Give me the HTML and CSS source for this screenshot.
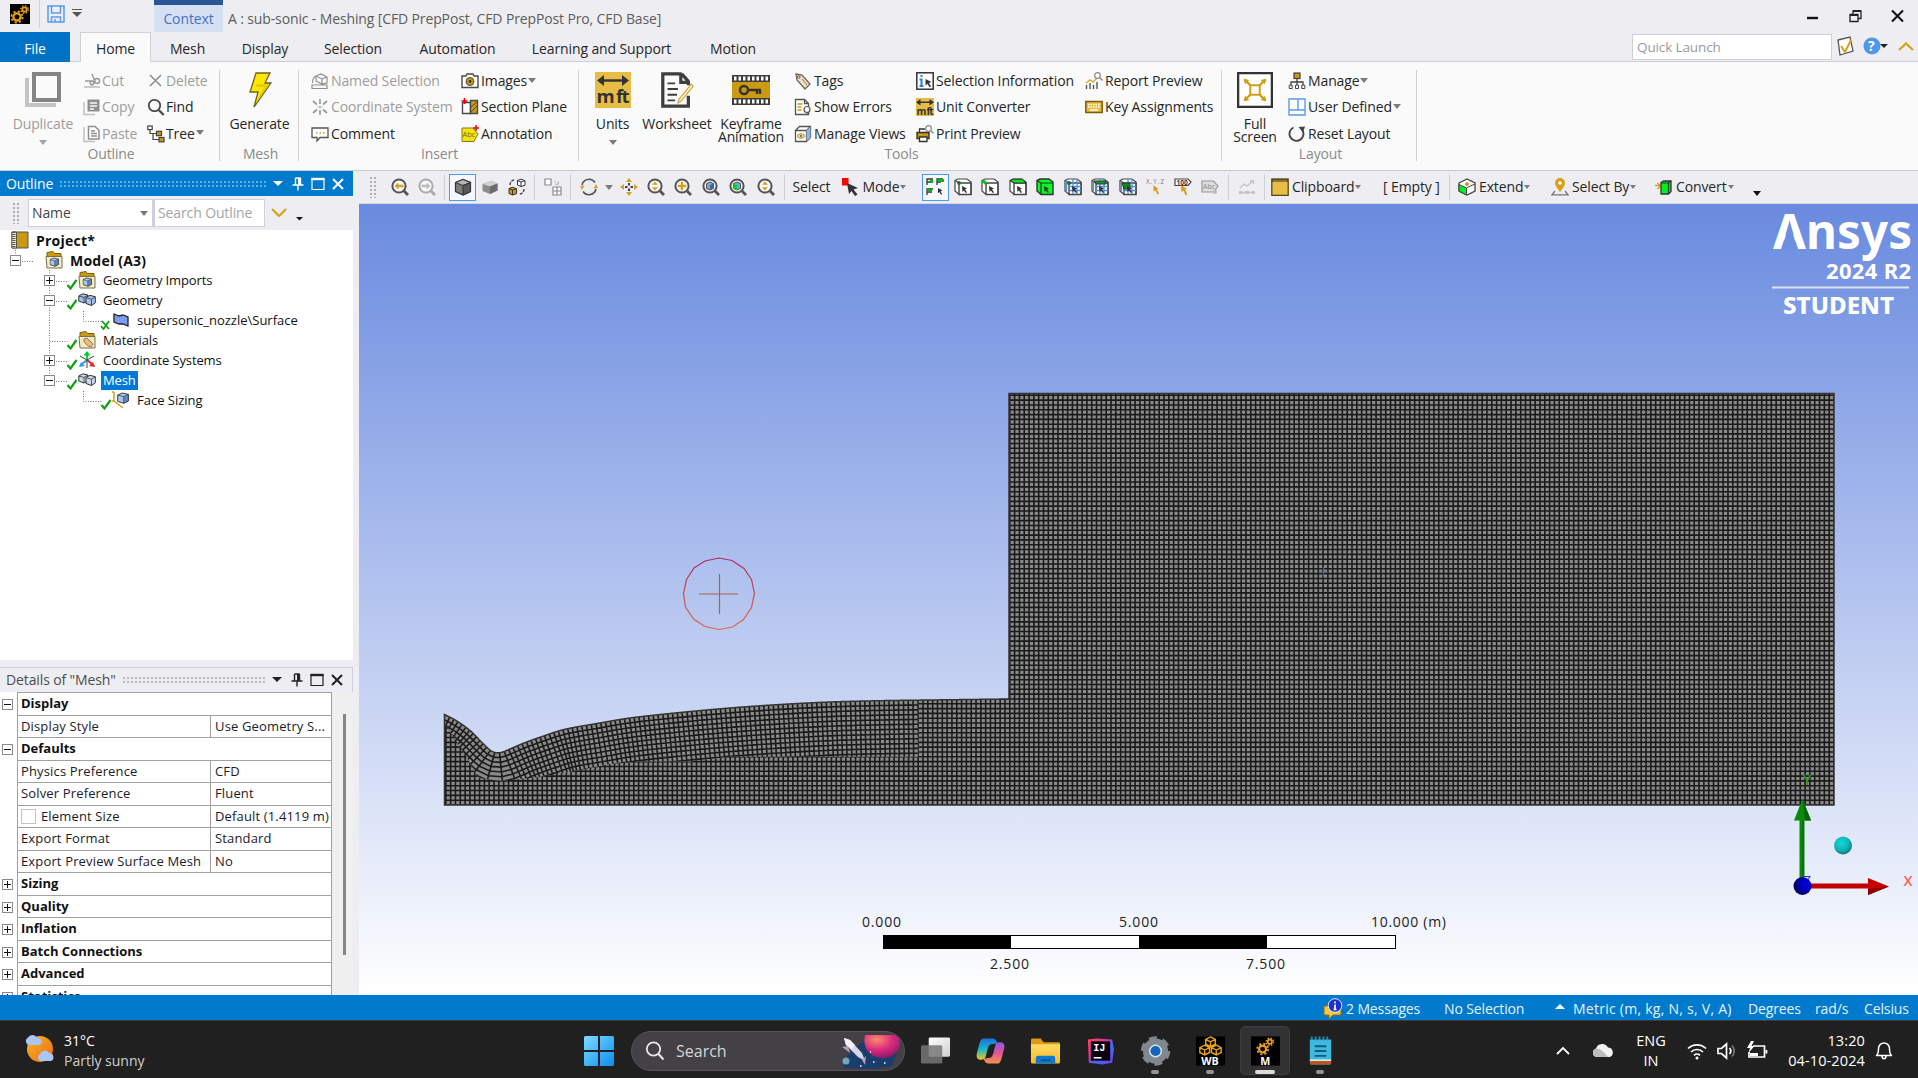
FILE: index.html
```html
<!DOCTYPE html>
<html lang="en">
<head>
<meta charset="utf-8">
<title>A : sub-sonic - Meshing</title>
<link rel="stylesheet" href="styles.css">
</head>
<body>
<svg class="defs" aria-hidden="true">
  <defs>
    <linearGradient id="gSky" x1="0" y1="0" x2="0" y2="1"><stop offset="0" stop-color="#698adf"/><stop offset="1" stop-color="#ffffff"/></linearGradient>
    <linearGradient id="gWin" x1="0" y1="0" x2="1" y2="1"><stop offset="0" stop-color="#7fdcff"/><stop offset="1" stop-color="#0a8cf0"/></linearGradient>
    <linearGradient id="gSun" x1="0" y1="0" x2="1" y2="1"><stop offset="0" stop-color="#fbb62c"/><stop offset="1" stop-color="#ea6a12"/></linearGradient>
    <linearGradient id="gCopA" x1="0" y1="0" x2="0" y2="1"><stop offset="0" stop-color="#1c6fe0"/><stop offset=".5" stop-color="#19b6c9"/><stop offset="1" stop-color="#e9c71e"/></linearGradient>
    <linearGradient id="gCopB" x1="0" y1="0" x2="0" y2="1"><stop offset="0" stop-color="#8a58e8"/><stop offset=".5" stop-color="#e0559a"/><stop offset="1" stop-color="#f8924a"/></linearGradient>
    <linearGradient id="gIj" x1="0" y1="0" x2="1" y2="1"><stop offset="0" stop-color="#fc4a5a"/><stop offset=".35" stop-color="#e8318c"/><stop offset=".6" stop-color="#3b6cf5"/><stop offset="1" stop-color="#7a35e8"/></linearGradient>
    <linearGradient id="gFolder" x1="0" y1="0" x2="0" y2="1"><stop offset="0" stop-color="#ffdc6a"/><stop offset="1" stop-color="#f7b923"/></linearGradient>
    <linearGradient id="gTv" x1="0" y1="0" x2="1" y2="1"><stop offset="0" stop-color="#ffffff"/><stop offset="1" stop-color="#cfcfcf"/></linearGradient>
    <radialGradient id="gTeal" cx=".4" cy=".35" r=".7"><stop offset="0" stop-color="#12d6d6"/><stop offset=".6" stop-color="#0fb5b5"/><stop offset="1" stop-color="#0a6f70"/></radialGradient>
    <radialGradient id="gBlue" cx=".7" cy=".4" r=".7"><stop offset="0" stop-color="#0000e8"/><stop offset=".5" stop-color="#0000b0"/><stop offset="1" stop-color="#000058"/></radialGradient>
    <radialGradient id="gPlanet" cx=".35" cy=".2" r=".9"><stop offset="0" stop-color="#ff8a6e"/><stop offset=".5" stop-color="#d92a7e"/><stop offset="1" stop-color="#7d1668"/></radialGradient>
    <linearGradient id="gRing" x1="0" y1="0" x2="0" y2="1"><stop offset="0" stop-color="#b02a68"/><stop offset=".5" stop-color="#c2504c"/><stop offset="1" stop-color="#dc6a4c"/></linearGradient>

    <symbol id="i-gears" viewBox="0 0 20 20"><rect width="20" height="20" fill="#000"/><g fill="none" stroke="#e8a31b"><circle cx="7" cy="13" r="3.6" stroke-width="2.2"/><circle cx="7" cy="13" r="5.6" stroke-width="1.8" stroke-dasharray="2.2 2.2"/><circle cx="14.5" cy="5.5" r="2.2" stroke-width="1.7"/><circle cx="14.5" cy="5.5" r="3.8" stroke-width="1.4" stroke-dasharray="1.5 1.5"/></g></symbol>
    <symbol id="i-save" viewBox="0 0 18 18"><path d="M1 1h16v16H1zM4.500 1v7h9V1M4.500 17v-5h9v5M8 17v-3" fill="none" stroke="#5b9bea" stroke-width="1.500"/></symbol>
    <symbol id="i-dup" viewBox="0 0 36 36"><path d="M2 6v27h29" fill="none" stroke="#c3c3c3" stroke-width="4"/><rect x="9" y="2" width="25" height="26" fill="#fafafa" stroke="#858585" stroke-width="4"/></symbol>
    <symbol id="i-cut" viewBox="0 0 18 18"><path d="M1 15h16" stroke="#bbb" stroke-width="1.500"/><g fill="none" stroke="#9a9a9a" stroke-width="1.500"><path d="M9 2l3 8M2 9h8"/><circle cx="14" cy="9" r="2.500"/><circle cx="9" cy="11" r="1.800"/></g></symbol>
    <symbol id="i-copy" viewBox="0 0 18 18"><path d="M1 4v12.500h11" fill="none" stroke="#c0c0c0" stroke-width="1.500"/><path d="M4.500 1.500h12v12h-12z" fill="#8f8f8f"/><path d="M7 5h7M7 8h7M7 11h4" stroke="#fafafa" stroke-width="1.300"/></symbol>
    <symbol id="i-paste" viewBox="0 0 18 18"><path d="M1 2v14.500h11" fill="none" stroke="#c0c0c0" stroke-width="1.500"/><path d="M5.500 1.500h6.500l4 4v8.500h-10.500z" fill="#fff" stroke="#8f8f8f" stroke-width="1.500"/><path d="M8 6h4M8 8.500h6M8 11h6" stroke="#8f8f8f" stroke-width="1.300"/></symbol>
    <symbol id="i-del" viewBox="0 0 18 18"><path d="M3 3l11 11M14 3L3 14" stroke="#8f8f8f" stroke-width="1.600"/></symbol>
    <symbol id="i-find" viewBox="0 0 18 18"><circle cx="7.500" cy="7.500" r="5.700" fill="none" stroke="#4a4a4a" stroke-width="1.800"/><path d="M11.700 12l5 5" stroke="#4a4a4a" stroke-width="2.400"/></symbol>
    <symbol id="i-tree" viewBox="0 0 18 18"><g fill="#fff" stroke="#444" stroke-width="1.200"><path d="M3 4v4.500h6M6 8.500v6h6" fill="none"/><rect x=".8" y="1" width="4.400" height="3.600"/><rect x="9.500" y="6.300" width="5" height="4.400" fill="#c99a10"/><rect x="12" y="12.500" width="5" height="4.400" fill="#c99a10"/></g></symbol>
    <symbol id="i-bolt" viewBox="0 0 24 36"><path d="M8 1h14l-5 10h6L6 35l4-15H2z" fill="#ffe600" stroke="#6e6325" stroke-width="1.300"/><path d="M22 12L7 33l9-18H8l1-3z" fill="#d8bc00" opacity=".6"/></symbol>
    <symbol id="i-named" viewBox="0 0 18 18"><g fill="none" stroke="#8f8f8f" stroke-width="1.200"><path d="M1 13h15v3.500H1zM5 4l5-2 6 3v6l-5 1-6-3zM5 4l6 3v5M11 7l5-2M1.500 11c0-4 1-6 3.500-7"/></g></symbol>
    <symbol id="i-cs" viewBox="0 0 18 18"><path d="M9 1v5M9 17v-5M2 3l4 3.500M16 3l-4 3.500M2 15l4-3.500M16 15l-4-3.500" stroke="#999" stroke-width="1.700"/><path d="M6 9h6M9 7v4" stroke="#bbb"/></symbol>
    <symbol id="i-comment" viewBox="0 0 18 18"><path d="M1 3h16v9.500H9l-3 3.500v-3.500H1z" fill="#fff" stroke="#555" stroke-width="1.300"/><path d="M5 8h1.500M8.500 8H10M12 8h1.500" stroke="#c99a10" stroke-width="1.300"/></symbol>
    <symbol id="i-cam" viewBox="0 0 18 18"><path d="M1 4h4l1-2h6l1 2h4v11.500H1z" fill="#fff" stroke="#4a4a4a" stroke-width="1.400"/><circle cx="9" cy="9.500" r="4" fill="#c99a10" stroke="#4a4a4a"/><circle cx="9" cy="9.500" r="1.400" fill="#333"/></symbol>
    <symbol id="i-section" viewBox="0 0 18 18"><path d="M1.500 4.500h8v11h-8z" fill="#fff" stroke="#4a4a4a" stroke-width="1.400"/><path d="M9.500 2.500h7v13h-7z" fill="#c99a10" stroke="#4a4a4a" stroke-width="1.400"/><path d="M10 9l6-5M10 14l6-6" stroke="#4a4a4a"/><path d="M3.500 0v6M.5 3h6" stroke="#e00" stroke-width="1.500"/></symbol>
    <symbol id="i-anno" viewBox="0 0 18 18"><path d="M1 3h11l5 6-4 7.500H1z" fill="#f2e21c" stroke="#8c7a00"/><text x="1.500" y="12" font-size="7.500" fill="#7a6a00">Abc</text><path d="M15 0v6M12 3h6" stroke="#e00" stroke-width="1.500"/></symbol>
    <symbol id="i-units" viewBox="0 0 36 36"><rect width="36" height="36" fill="#e7bd45"/><path d="M5 8.500h26" stroke="#333" stroke-width="2.400"/><path d="M2 8.500l7-5.500v11zM34 8.500L27 3v11z" fill="#333"/><text x="1.500" y="31" font-size="18.500" font-weight="700" fill="#333" textLength="33">m ft</text></symbol>
    <symbol id="i-sheet" viewBox="0 0 36 38"><path d="M23 2H3v34h27V25M23 2l7 8v4M22 2v9h8" fill="none" stroke="#3e3e3e" stroke-width="3.400"/><path d="M8 12h8M8 18h11M8 24h10M8 30h8" stroke="#3e3e3e" stroke-width="2"/><path d="M33 13l2 2-13 16-3 1.500 1-3.500z" fill="#fff" stroke="#dca93a" stroke-width="1.400"/></symbol>
    <symbol id="i-key" viewBox="0 0 38 30"><rect width="38" height="30" fill="#3e3e3e"/><rect y="7" width="38" height="16" fill="#cb9a10"/><path d="M2 3.500h36M2 26.500h36" stroke="#fff" stroke-width="4" stroke-dasharray="2.500 2"/><circle cx="12" cy="15" r="4" fill="none" stroke="#333" stroke-width="2.500"/><path d="M16 15h13M25 15v4M28 15v4" stroke="#333" stroke-width="2.400"/></symbol>
    <symbol id="i-tag" viewBox="0 0 18 18"><path d="M2 2l6 1 8 9-5 5-8-9z" fill="#efe0c0" stroke="#6e6656" stroke-width="1.300"/><circle cx="4.800" cy="5" r="1.300" fill="#fff" stroke="#555"/><path d="M8 7l5 6" stroke="#8a7d5c"/></symbol>
    <symbol id="i-err" viewBox="0 0 18 18"><path d="M1.500 1.500h9l4 4v11h-13zM10.500 1.500v4h4" fill="#fff" stroke="#555" stroke-width="1.300"/><path d="M3.500 6h5M3.500 9h4M3.500 12h4" stroke="#c99a10" stroke-width="1.300"/><circle cx="13" cy="11.500" r="3" fill="#fff" stroke="#555" stroke-width="1.200"/><path d="M12 16h2.500" stroke="#555"/></symbol>
    <symbol id="i-views" viewBox="0 0 18 18"><path d="M1.500 5.500l4-4h11v11l-4 4h-11zM12.500 5.500l4-4M1.500 5.500h11v11" fill="#fff" stroke="#555" stroke-width="1.300"/><path d="M12.500 5.500l4-4v11l-4 4z" fill="#8db4e2"/><ellipse cx="7" cy="11" rx="3.500" ry="2.200" fill="#f3e2ae" stroke="#b18a20"/><circle cx="7" cy="11" r="1" fill="#555"/></symbol>
    <symbol id="i-selinfo" viewBox="0 0 18 18"><rect x=".8" y=".8" width="16.400" height="16.400" fill="#fff" stroke="#333" stroke-width="1.500"/><path d="M5.500 3v2M3.500 7.500h2v6.500M3.500 14h4" stroke="#2b7de0" stroke-width="2" fill="none"/><path d="M9.500 7l6 3-2.500 1 2 3.500-1.500.7-2-3.400-2 1.700z" fill="#333"/></symbol>
    <symbol id="i-uconv" viewBox="0 0 36 36"><rect width="36" height="36" fill="#e7bd45"/><path d="M3 8.500h30" stroke="#333" stroke-width="3"/><path d="M0 8.500L9 2v13zM36 8.500L27 2v13z" fill="#333"/><text x="1" y="33" font-size="20" font-weight="700" fill="#333" textLength="34">m ft</text></symbol>
    <symbol id="i-print" viewBox="0 0 18 18"><path d="M1 7.500h12v6H1z" fill="#c99a10" stroke="#333" stroke-width="1.400"/><path d="M3.500 7V4H9M3.500 12h7.500v4.500H3.500z" fill="#fff" stroke="#333" stroke-width="1.300"/><circle cx="12.500" cy="3.500" r="2.800" fill="#fff" stroke="#888" stroke-width="1.200"/><path d="M14.500 5.500l3 3" stroke="#888" stroke-width="1.400"/></symbol>
    <symbol id="i-report" viewBox="0 0 18 18"><path d="M1.500 13v4M5 11v6M8.500 13v4M12 10v7" stroke="#555" stroke-width="1.400"/><path d="M1 11l4-3 3 2 4-4" stroke="#dca93a" stroke-width="1.500" fill="none"/><circle cx="12.500" cy="3.500" r="2.800" fill="#fff" stroke="#888" stroke-width="1.200"/><path d="M14.500 5.500l3 3" stroke="#888" stroke-width="1.400"/></symbol>
    <symbol id="i-kbd" viewBox="0 0 18 18"><rect x=".8" y="3.500" width="16.400" height="11" fill="#e7bd45" stroke="#7a5c0a" stroke-width="1.500"/><path d="M3 6.500h12M3 9h12" stroke="#fff" stroke-width="1.500" stroke-dasharray="1.500 1"/><path d="M5 12h8" stroke="#fff" stroke-width="1.400"/></symbol>
    <symbol id="i-full" viewBox="0 0 38 38"><rect x="1.200" y="1.200" width="35.600" height="35.600" fill="#fff" stroke="#333" stroke-width="2.400"/><rect x="14" y="14" width="10" height="10" fill="none" stroke="#cf9d12" stroke-width="2"/><path d="M14 14L8 8M24 14l6-6M14 24l-6 6M24 24l6 6" stroke="#cf9d12" stroke-width="2.500"/><path d="M7 7l6 1.500L8.500 13zM31 7l-6 1.500L29.500 13zM7 31l6-1.500L8.500 25zM31 31l-6-1.500 4.500-4.500z" fill="#cf9d12"/></symbol>
    <symbol id="i-manage" viewBox="0 0 18 18"><path d="M9 6v4M3 13v-3h12v3M9 10v3" fill="none" stroke="#444" stroke-width="1.300"/><rect x="6" y="1" width="6" height="5.500" fill="#c99a10" stroke="#444" stroke-width="1.200"/><path d="M1.200 13.200h3v3.300h-3zM7.500 13.200h3v3.300h-3zM13.800 13.200h3v3.300h-3z" fill="#fff" stroke="#444"/></symbol>
    <symbol id="i-user" viewBox="0 0 18 18"><path d="M1 1h16v16H1zM1 12h16M10 1v11" fill="#fff" stroke="#5b9bea" stroke-width="1.400"/></symbol>
    <symbol id="i-reset" viewBox="0 0 18 18"><path d="M5.500 2.500A7 7 0 1 0 14 4.500" fill="none" stroke="#444" stroke-width="1.900"/><path d="M10.500 2l6.500-.5-2 6z" fill="#444"/></symbol>

    <symbol id="m-glass" viewBox="0 0 18 18"><circle cx="8" cy="8" r="6.600" fill="#fafafa" stroke="currentColor" stroke-width="2"/><path d="M12.800 12.800l4.200 4.200" stroke="currentColor" stroke-width="2.800"/></symbol>
    <symbol id="t-back" viewBox="0 0 18 18"><use href="#m-glass"/><path d="M3.500 8l4-3.500v2.300h5v2.400h-5v2.300z" fill="#d6a01c"/></symbol>
    <symbol id="t-fwd" viewBox="0 0 18 18"><use href="#m-glass"/><path d="M12.500 8l-4-3.500v2.300h-5v2.400h5v2.300z" fill="#bbb"/></symbol>
    <symbol id="t-updn" viewBox="0 0 18 18"><use href="#m-glass"/><path d="M8 3.500l3 3.300H5zM8 12.500L5 9.200h6z" fill="#d6a01c"/></symbol>
    <symbol id="t-plus" viewBox="0 0 18 18"><use href="#m-glass"/><path d="M8 3.700v8.600M3.700 8h8.600" stroke="#d6a01c" stroke-width="2.400"/></symbol>
    <symbol id="t-fit" viewBox="0 0 18 18"><use href="#m-glass"/><path d="M4.500 5.500L8 4l3.500 1.500v5L8 12l-3.500-1.500z" fill="#7aa4dc" stroke="#333" stroke-width=".8"/><path d="M8 7v5l3.500-1.500v-5z" fill="#44699c"/></symbol>
    <symbol id="t-fitg" viewBox="0 0 18 18"><use href="#m-glass"/><path d="M4.500 5.500L8 4l3.500 1.500v5L8 12l-3.500-1.500z" fill="#7aa4dc" stroke="#333" stroke-width=".8"/><path d="M4.500 6L8 7v5l-3.500-1.500z" fill="#00d820"/></symbol>
    <symbol id="t-cube" viewBox="0 0 18 18"><path d="M1.500 4.500L9 1.500l7.500 3v9L9 17l-7.500-3.500z" fill="#7c7c7c" stroke="#333" stroke-width="1.200"/><path d="M1.500 4.500L9 1.500l7.500 3L9 7.500z" fill="#b5b5b5" stroke="#333"/><path d="M9 7.500l7.500-3v9L9 17z" fill="#585858" stroke="#333"/></symbol>
    <symbol id="t-cubel" viewBox="0 0 18 18"><path d="M1.500 6L10 3l6.500 2.500v7L9 16l-7.500-3z" fill="#8c8c8c"/><path d="M1.500 6L10 3l6.500 2.500L9 8.500z" fill="#d0d0d0"/><path d="M9 8.500l7.500-3v7L9 16z" fill="#6c6c6c"/></symbol>
    <symbol id="t-swap" viewBox="0 0 18 18"><path d="M9.500 2.500l3.500-1.300 4 1.500v4.500L13 8.500 9.500 7z" fill="#fff" stroke="#333"/><path d="M9.500 2.500L13 4v4.500M13 4l4-1.500" fill="none" stroke="#333"/><path d="M1 10.500l3.500-1.300 4 1.500v5L4.500 17 1 15.500z" fill="#c99a10" stroke="#333"/><path d="M1 10.500L4.500 12v5M4.500 12l4-1.500" fill="none" stroke="#333"/><path d="M2 7c0-3 2-5 5-5M16 11c0 3-2 5-5 5" fill="none" stroke="#444" stroke-width="1.400" stroke-dasharray="3 1"/></symbol>
    <symbol id="t-expl" viewBox="0 0 18 18"><path d="M1 1h6v6H1zM9 9h8v8H9zM13 9v8M9 13h8" fill="#fff" stroke="#8a8a8a" stroke-width="1.200"/><path d="M10 3l4 3M11 6.500h3.500V3" fill="none" stroke="#c0c0c0"/></symbol>
    <symbol id="t-rot" viewBox="0 0 18 18"><path d="M2 7a7.200 7.200 0 0 1 13-2.500M16 11a7.200 7.200 0 0 1-13 2.500" fill="none" stroke="#555" stroke-width="1.600"/><path d="M0 8l4.500-.5L2 12zM18 10l-4.500.5L16 6z" fill="#d6a01c"/></symbol>
    <symbol id="t-pan" viewBox="0 0 18 18"><path d="M9 0l3 4H6zM9 18l3-4H6zM0 9l4-3v6zM18 9l-4-3v6z" fill="#d6a01c"/><path d="M9 5v2.500M9 10.500V13M5 9h2.500M10.500 9H13" stroke="#444" stroke-width="2"/></symbol>
    <symbol id="t-mode" viewBox="0 0 18 18"><path d="M1 0h6.500v7.500H1z" fill="#f00"/><path d="M6 5l11 5-4.500 1.500 4 5-2.500 1.500-3.500-5L8 16z" fill="#333"/></symbol>
    <symbol id="m-arrow" viewBox="0 0 18 18"><path d="M8 8l5 2.500-2 .9 2 2.800-1.200.9-1.900-2.700L8.500 14z" fill="#333"/></symbol>
    <symbol id="m-box" viewBox="0 0 18 18"><path d="M1 2.500l3-1.500h9l4 3v12.500H5L1 13z" fill="#fff" stroke="#444" stroke-width="1.200"/><path d="M5 5h12v11.500H5zM1 2.500L5 5" fill="none" stroke="#444" stroke-width="1.400"/></symbol>
    <symbol id="t-s0" viewBox="0 0 20 20"><path d="M2 8V2h6M2 5h5M12 8V2h6M12 5h4M2 18v-6h6M2 15h5" fill="none" stroke="#333" stroke-width="1.300"/><path d="M5 3h3v3H5zM13 2h6v3h-6zM2 12h5v2.500H2z" fill="#00b818"/><path d="M13 11l4.500 2.500-2 .8 1.700 2.700-1.200.8-1.700-2.700-1.300 1.200z" fill="#333"/></symbol>
    <symbol id="t-s1" viewBox="0 0 18 18"><use href="#m-box"/><circle cx="5" cy="5" r="1.900" fill="#2a6b2a"/><use href="#m-arrow"/></symbol>
    <symbol id="t-s2" viewBox="0 0 18 18"><use href="#m-box"/><path d="M1.500 2.500l3.500 3" stroke="#00c820" stroke-width="3"/><use href="#m-arrow"/></symbol>
    <symbol id="t-s3" viewBox="0 0 18 18"><use href="#m-box"/><path d="M1.500 2.500L4 1.200h9L17 5H5z" fill="#00e620" stroke="#333"/><use href="#m-arrow"/></symbol>
    <symbol id="t-s4" viewBox="0 0 18 18"><path d="M1 2.500l3-1.500h9l4 3v12.500H5L1 13z" fill="#00ff1e" stroke="#333" stroke-width="1.400"/><path d="M1 2.500L5 5v11.500M5 5h12" fill="none" stroke="#333" stroke-width="1.200"/><use href="#m-arrow"/></symbol>
    <symbol id="m-grid" viewBox="0 0 18 18"><path d="M5 8.500h12M5 12.500h12M9 1v15M13 1v15M2.500 3v10" stroke="#4b8fe2" fill="none" stroke-width="1.300"/></symbol>
    <symbol id="t-s5" viewBox="0 0 18 18"><use href="#m-box"/><use href="#m-grid"/><circle cx="5" cy="5" r="2" fill="#2a6b2a"/><use href="#m-arrow"/></symbol>
    <symbol id="t-s6" viewBox="0 0 18 18"><use href="#m-box"/><use href="#m-grid"/><path d="M3 3h12v3H5z" fill="#0a9c22" stroke="#333"/><use href="#m-arrow"/></symbol>
    <symbol id="t-s7" viewBox="0 0 18 18"><use href="#m-box"/><use href="#m-grid"/><path d="M3 5h8v6H5z" fill="#0a8c22" stroke="#333"/><use href="#m-arrow"/></symbol>
    <symbol id="t-xyz" viewBox="0 0 20 18"><text x="0" y="6" font-size="7" fill="#777" textLength="20">X.Y.Z</text><path d="M8 7l6 4-2 .5 2.500 5-2 .8-2-4.500L8.500 14z" fill="#d6a01c"/></symbol>
    <symbol id="t-100" viewBox="0 0 18 18"><path d="M1 1h13l3 3-3 3.500H1z" fill="#fff" stroke="#444" stroke-width="1.200"/><text x="2.500" y="6.500" font-size="6.500" font-weight="700" fill="#333">100</text><path d="M7 7l6 4-2 .5 2.500 5-2 .8-2-4.500L7.500 14z" fill="#d6a01c"/></symbol>
    <symbol id="t-abc" viewBox="0 0 18 18"><path d="M1 3h11.500l4.500 5-4 6H1z" fill="#ddd" stroke="#999" stroke-width="1.200"/><text x="2" y="11" font-size="7" fill="#888">Abc</text><circle cx="14" cy="14" r="2" fill="#bbb"/></symbol>
    <symbol id="t-chart" viewBox="0 0 18 18"><path d="M2 10l4-4 3 2 6-5M12 3h3.500v3M1 14.500h16" fill="none" stroke="#c4c4c4" stroke-width="1.300"/><path d="M1 14.500h3M7 14.500h4M14 14.500h3" stroke="#c4c4c4" stroke-width="3"/></symbol>
    <symbol id="t-clip" viewBox="0 0 18 18"><rect x=".8" y="1" width="16.400" height="16.400" fill="#e7bd45" stroke="#554a22" stroke-width="1.300"/><path d="M1 1h16v3H1zM6 4l3-2 3 2z" fill="#554a22"/><path d="M2 3h14" stroke="#e7bd45" stroke-width=".8"/></symbol>
    <symbol id="t-ext" viewBox="0 0 18 18"><path d="M1 5l8-4 8 4v8l-8 4-8-4z" fill="#fff" stroke="#444" stroke-width="1.300"/><path d="M1 6.500L8.500 10v7L1 13z" fill="#00f020" stroke="#444"/><path d="M9 9.500L17 6M9 4v4M7 6h4" stroke="#444" fill="none"/><path d="M9 4v3.500M7 5.700h4" stroke="#d6a01c" stroke-width="1.500"/></symbol>
    <symbol id="t-selby" viewBox="0 0 18 18"><path d="M9 0a5 5 0 0 1 5 5c0 3-5 9-5 9S4 8 4 5a5 5 0 0 1 5-5z" fill="#d6a01c"/><circle cx="9" cy="5" r="1.800" fill="#fff"/><path d="M4 13l-3 3.800h16L14 13" fill="none" stroke="#777" stroke-width="1.300"/></symbol>
    <symbol id="t-conv" viewBox="0 0 18 18"><path d="M0 7.500h4M2.500 5l3 3-3 3" stroke="#d6a01c" stroke-width="1.600" fill="none"/><path d="M6 4.500L8.500 3H16v10.500L13.500 16H6z" fill="#00f020" stroke="#333" stroke-width="1.300"/><path d="M6 5h7.500v11M13.500 5L16 3" fill="none" stroke="#333" stroke-width="1.200"/></symbol>

    <symbol id="o-proj" viewBox="0 0 18 18"><path d="M1 1h16v16H1z" fill="#c9990f" stroke="#555"/><path d="M1 1h4.500v16H1z" fill="#f7edc8" stroke="#555"/><path d="M3 1v16" stroke="#555" stroke-width="3" stroke-dasharray="1 1"/></symbol>
    <symbol id="m-folder" viewBox="0 0 18 18"><path d="M2 4V1.500l6-1 1.500 2H16V6H2z" fill="#c9990f" stroke="#7c5f0c"/><path d="M1 5.500h16V17H2z" fill="#f6ecc0" stroke="#77704f"/></symbol>
    <symbol id="m-cube" viewBox="0 0 18 18"><path d="M1 4.500L8 1.500l9 2v10l-7 3.500-9-3z" fill="#a9c6ef" stroke="#333" stroke-width="1.400"/><path d="M10 7l7-3.500v10L10 17z" fill="#6088c4" stroke="#333"/><path d="M1 4.500L10 7" stroke="#333"/></symbol>
    <symbol id="o-fcube" viewBox="0 0 18 18"><use href="#m-folder"/><use href="#m-cube" x="4.500" y="6" width="9.500" height="10"/></symbol>
    <symbol id="m-pair" viewBox="0 0 18 18"><path d="M.8 5l4-2.200 5 1.200v6L6 12 .8 10z" stroke="#333"/><path d="M.8 5L6 6.500V12M6 6.500L9.800 4" fill="none" stroke="#333" stroke-width=".8"/><path d="M8 6.500L12 4.300l5.300 1.500v6L13.500 14.500 8 12.500z" stroke="#333"/><path d="M8 6.500l5.500 1.800v6.200M13.500 8.300l3.800-2.500" fill="none" stroke="#333" stroke-width=".8"/></symbol>
    <symbol id="o-geo" viewBox="0 0 18 18"><use href="#m-pair" fill="#a3c2ee"/></symbol>
    <symbol id="o-mesh" viewBox="0 0 18 18"><use href="#m-pair" fill="#cddaee"/></symbol>
    <symbol id="o-surf" viewBox="0 0 18 18"><path d="M2 3l5 2 4-1 5 2v9l-5-2-4 0-5-2z" fill="#7f9cf4" stroke="#222" stroke-width="1.300"/></symbol>
    <symbol id="o-mat" viewBox="0 0 18 18"><use href="#m-folder"/><path d="M6 8l3-1 6 6-2 3-3-1-4-4z" fill="#e9b98a" stroke="#a67848"/></symbol>
    <symbol id="o-cs" viewBox="0 0 18 18"><path d="M9 9V4" stroke="#0d3" stroke-width="2"/><path d="M9 0l3.500 4.500h-7z" fill="#00cc22"/><path d="M9 9l5 4" stroke="#e22" stroke-width="2"/><path d="M17 16l-6-1 4-4z" fill="#e22"/><path d="M9 9l-5 4" stroke="#39e" stroke-width="2"/><path d="M1 16l6-1-4-4z" fill="#39e"/><path d="M9 9L2 5M9 9l7-4M9 9v8" stroke="#444"/></symbol>
    <symbol id="o-face" viewBox="0 0 18 18"><path d="M2 1v9l9 7M2 1H0M2 10H0" fill="none" stroke="#d6a01c" stroke-width="1.500"/><use href="#m-cube" x="5" y="1" width="12" height="12"/></symbol>
    <symbol id="o-ok" viewBox="0 0 12 12"><path d="M1.500 7l3 3.500L10.500 2" fill="none" stroke="#12a012" stroke-width="2.200"/></symbol>
    <symbol id="o-okx" viewBox="0 0 12 12"><path d="M1 8l2.500 3L9 3M2 3l7 8" fill="none" stroke="#12a012" stroke-width="1.800"/></symbol>

    <symbol id="w-pin" viewBox="0 0 14 14"><path d="M4.500 1h5M4.500 1v7M9.500 1v7M1.500 8h11M7 8v5.500" fill="none" stroke="currentColor" stroke-width="1.400"/><path d="M8 1v7" stroke="currentColor" stroke-width="2"/></symbol>
    <symbol id="w-max" viewBox="0 0 14 14"><path d="M1 1.500h12v11H1z" fill="none" stroke="currentColor" stroke-width="1.200"/><path d="M.5 2h13" stroke="currentColor" stroke-width="2.400"/></symbol>
    <symbol id="w-x" viewBox="0 0 14 14"><path d="M2 2l10 10M12 2L2 12" stroke="currentColor" stroke-width="2"/></symbol>
  </defs>
</svg>

<header class="titlebar">
  <svg class="app-icon"><use href="#i-gears"/></svg>
  <i class="qat-sep"></i>
  <svg class="save"><use href="#i-save"/></svg>
  <i class="qat-more"></i>
  <div class="context">Context</div>
  <div class="title">A : sub-sonic - Meshing [CFD PrepPost, CFD PrepPost Pro, CFD Base]</div>
  <svg class="winctl" viewBox="0 0 110 24"><path d="M8 12h11" stroke="#111" stroke-width="2.400"/><path d="M51 8.500h8v7h-8zM54 8V5h8v7.500h-3" fill="none" stroke="#222" stroke-width="1.300"/><path d="M51 9h8M54 5h8" stroke="#222" stroke-width="2"/><path d="M93 4.500l11 11M104 4.500l-11 11" stroke="#111" stroke-width="2.100"/></svg>
</header>

<nav class="tabs">
  <span class="file">File</span>
  <span class="tab home">Home</span>
  <span class="tab t-mesh">Mesh</span>
  <span class="tab t-disp">Display</span>
  <span class="tab t-sel">Selection</span>
  <span class="tab t-auto">Automation</span>
  <span class="tab t-learn">Learning and Support</span>
  <span class="tab t-mot">Motion</span>
  <div class="quick">Quick Launch</div>
  <svg class="quick-icons" viewBox="0 0 86 30"><path d="M6 8l12-3 3 14-13 4z" fill="#fff" stroke="#555" stroke-width="1.300"/><path d="M9 14l4 6 6-12" fill="none" stroke="#d6a01c" stroke-width="2"/><circle cx="40" cy="14" r="8.500" fill="#4d98ea"/><text x="36" y="19" font-size="14" font-weight="700" fill="#fff">?</text><path d="M48 12h8l-4 4z" fill="#222"/><path d="M67 18l7-6.500 7 6.500" fill="none" stroke="#d6a01c" stroke-width="2.200"/></svg>
</nav>

<section class="ribbon">
  <div class="group g1">
    <div class="big dim"><svg class="b36"><use href="#i-dup"/></svg><span>Duplicate</span><i class="caret"></i></div>
    <div class="col dim"><div><svg><use href="#i-cut"/></svg>Cut</div><div><svg><use href="#i-copy"/></svg>Copy</div><div><svg><use href="#i-paste"/></svg>Paste</div></div>
    <div class="col"><div class="dim"><svg><use href="#i-del"/></svg>Delete</div><div><svg><use href="#i-find"/></svg>Find</div><div><svg><use href="#i-tree"/></svg>Tree<i class="caret"></i></div></div>
    <div class="label">Outline</div>
  </div>
  <div class="group g2">
    <div class="big"><svg class="b36"><use href="#i-bolt"/></svg><span>Generate</span></div>
    <div class="label">Mesh</div>
  </div>
  <div class="group g3">
    <div class="col"><div class="dim"><svg><use href="#i-named"/></svg>Named Selection</div><div class="dim"><svg><use href="#i-cs"/></svg>Coordinate System</div><div><svg><use href="#i-comment"/></svg>Comment</div></div>
    <div class="col"><div><svg><use href="#i-cam"/></svg>Images<i class="caret"></i></div><div><svg><use href="#i-section"/></svg>Section Plane</div><div><svg><use href="#i-anno"/></svg>Annotation</div></div>
    <div class="label">Insert</div>
  </div>
  <div class="group g4">
    <div class="big"><svg class="b36"><use href="#i-units"/></svg><span>Units</span><i class="caret"></i></div>
    <div class="big"><svg class="b38"><use href="#i-sheet"/></svg><span>Worksheet</span></div>
    <div class="big"><svg class="b38"><use href="#i-key"/></svg><span>Keyframe<br>Animation</span></div>
    <div class="col"><div><svg><use href="#i-tag"/></svg>Tags</div><div><svg><use href="#i-err"/></svg>Show Errors</div><div><svg><use href="#i-views"/></svg>Manage Views</div></div>
    <div class="col"><div><svg><use href="#i-selinfo"/></svg>Selection Information</div><div><svg><use href="#i-uconv"/></svg>Unit Converter</div><div><svg><use href="#i-print"/></svg>Print Preview</div></div>
    <div class="col"><div><svg><use href="#i-report"/></svg>Report Preview</div><div><svg><use href="#i-kbd"/></svg>Key Assignments</div></div>
    <div class="label">Tools</div>
  </div>
  <div class="group g5">
    <div class="big"><svg class="b38"><use href="#i-full"/></svg><span>Full<br>Screen</span></div>
    <div class="col"><div><svg><use href="#i-manage"/></svg>Manage<i class="caret"></i></div><div><svg><use href="#i-user"/></svg>User Defined<i class="caret"></i></div><div><svg><use href="#i-reset"/></svg>Reset Layout</div></div>
    <div class="label">Layout</div>
  </div>
</section>

<main class="main">
  <aside class="left">
    <div class="phead active"><span>Outline</span><i class="dots"></i><i class="caret"></i><svg><use href="#w-pin"/></svg><svg><use href="#w-max"/></svg><svg><use href="#w-x"/></svg></div>
    <div class="ofilter"><i class="grip"></i><div class="combo">Name<i class="caret"></i></div><div class="search">Search Outline</div><svg viewBox="0 0 40 30"><path d="M6 11l7 7 7-7" fill="none" stroke="#d6a01c" stroke-width="2.200"/><path d="M30 19h7l-3.500 3.500z" fill="#111"/></svg></div>
    <div class="tree">
      <svg class="lines" viewBox="0 0 353 200"><path d="M15.500 20v6M22 31.500h12M49.500 40v112M56 51.500h12M56 71.500h12M49.500 111.500h18M56 131.500h12M56 151.500h12M83.500 81v10.500h18M83.500 161v10.500h18" fill="none" stroke="#777" stroke-dasharray="1 1.500"/></svg>
      <div class="row r0"><svg class="ic"><use href="#o-proj"/></svg><b>Project*</b></div>
      <div class="row r1"><i class="pm minus"></i><svg class="ic"><use href="#o-fcube"/></svg><b>Model (A3)</b></div>
      <div class="row r2"><i class="pm plus"></i><svg class="ok"><use href="#o-ok"/></svg><svg class="ic"><use href="#o-fcube"/></svg><span>Geometry Imports</span></div>
      <div class="row r2"><i class="pm minus"></i><svg class="ok"><use href="#o-ok"/></svg><svg class="ic"><use href="#o-geo"/></svg><span>Geometry</span></div>
      <div class="row r3"><svg class="ok"><use href="#o-okx"/></svg><svg class="ic"><use href="#o-surf"/></svg><span>supersonic_nozzle\Surface</span></div>
      <div class="row r2"><i class="pm none"></i><svg class="ok"><use href="#o-ok"/></svg><svg class="ic"><use href="#o-mat"/></svg><span>Materials</span></div>
      <div class="row r2"><i class="pm plus"></i><svg class="ok"><use href="#o-ok"/></svg><svg class="ic"><use href="#o-cs"/></svg><span>Coordinate Systems</span></div>
      <div class="row r2"><i class="pm minus"></i><svg class="ok"><use href="#o-ok"/></svg><svg class="ic"><use href="#o-mesh"/></svg><span class="picked">Mesh</span></div>
      <div class="row r3"><svg class="ok"><use href="#o-ok"/></svg><svg class="ic"><use href="#o-face"/></svg><span>Face Sizing</span></div>
    </div>
    <div class="phead"><span>Details of "Mesh"</span><i class="dots"></i><i class="caret"></i><svg><use href="#w-pin"/></svg><svg><use href="#w-max"/></svg><svg><use href="#w-x"/></svg></div>
    <div class="details">
      <div class="dtable">
        <div class="drow head"><i class="pm minus"></i><b>Display</b></div>
        <div class="drow"><span>Display Style</span><em>Use Geometry S...</em></div>
        <div class="drow head"><i class="pm minus"></i><b>Defaults</b></div>
        <div class="drow"><span>Physics Preference</span><em>CFD</em></div>
        <div class="drow"><span>Solver Preference</span><em>Fluent</em></div>
        <div class="drow"><span><i class="check"></i>Element Size</span><em>Default (1.4119 m)</em></div>
        <div class="drow"><span>Export Format</span><em>Standard</em></div>
        <div class="drow"><span>Export Preview Surface Mesh</span><em>No</em></div>
        <div class="drow head"><i class="pm plus"></i><b>Sizing</b></div>
        <div class="drow head"><i class="pm plus"></i><b>Quality</b></div>
        <div class="drow head"><i class="pm plus"></i><b>Inflation</b></div>
        <div class="drow head"><i class="pm plus"></i><b>Batch Connections</b></div>
        <div class="drow head"><i class="pm plus"></i><b>Advanced</b></div>
        <div class="drow head"><i class="pm plus"></i><b>Statistics</b></div>
      </div>
      <div class="scroll"><i></i></div>
    </div>
  </aside>

  <section class="right">
    <div class="toolbar">
      <div class="cell"><i class="grip"></i></div>
      <div class="cell"><svg><use href="#t-back"/></svg></div>
      <div class="cell pale"><svg><use href="#t-fwd"/></svg></div>
      <i class="sep"></i>
      <div class="cell on"><svg><use href="#t-cube"/></svg></div>
      <div class="cell"><svg><use href="#t-cubel"/></svg></div>
      <div class="cell"><svg><use href="#t-swap"/></svg></div>
      <i class="sep"></i>
      <div class="cell"><svg><use href="#t-expl"/></svg></div>
      <i class="sep"></i>
      <div class="cell"><svg><use href="#t-rot"/></svg></div>
      <div class="cell drop"><i class="caret"></i></div>
      <div class="cell"><svg><use href="#t-pan"/></svg></div>
      <div class="cell wide"><svg><use href="#t-updn"/></svg></div>
      <div class="cell wide"><svg><use href="#t-plus"/></svg></div>
      <div class="cell wide"><svg><use href="#t-fit"/></svg></div>
      <div class="cell wide"><svg><use href="#t-fitg"/></svg></div>
      <div class="cell wide"><svg><use href="#t-updn"/></svg></div>
      <i class="sep"></i>
      <div class="txt x-select">Select</div>
      <div class="txt x-mode"><svg><use href="#t-mode"/></svg>Mode<i class="caret"></i></div>
      <div class="cell wide on"><svg class="s20"><use href="#t-s0"/></svg></div>
      <div class="cell wide"><svg><use href="#t-s1"/></svg></div>
      <div class="cell wide"><svg><use href="#t-s2"/></svg></div>
      <div class="cell wide"><svg><use href="#t-s3"/></svg></div>
      <div class="cell wide"><svg><use href="#t-s4"/></svg></div>
      <div class="cell wide"><svg><use href="#t-s5"/></svg></div>
      <div class="cell wide"><svg><use href="#t-s6"/></svg></div>
      <div class="cell wide"><svg><use href="#t-s7"/></svg></div>
      <div class="cell wide"><svg><use href="#t-xyz"/></svg></div>
      <div class="cell wide"><svg><use href="#t-100"/></svg></div>
      <div class="cell wide"><svg><use href="#t-abc"/></svg></div>
      <i class="sep"></i>
      <div class="cell"><svg><use href="#t-chart"/></svg></div>
      <i class="sep"></i>
      <div class="txt x-clip"><svg><use href="#t-clip"/></svg>Clipboard<i class="caret"></i></div>
      <div class="txt x-empty">[ Empty ]</div>
      <i class="sep"></i>
      <div class="txt x-ext"><svg><use href="#t-ext"/></svg>Extend<i class="caret"></i></div>
      <div class="txt x-by"><svg><use href="#t-selby"/></svg>Select By<i class="caret"></i></div>
      <div class="txt x-conv"><svg><use href="#t-conv"/></svg>Convert<i class="caret"></i></div>
      <i class="overflow"></i>
    </div>
    <svg class="view" viewBox="359 204 1559 791">
      <defs>
        <clipPath id="clipUpper"><path id="upperShape"/></clipPath>
        <clipPath id="clipLower"><path id="lowerShape"/></clipPath>
      </defs>
      <rect x="359" y="204" width="1559" height="791" fill="url(#gSky)"/>
      <path id="body" fill="#8a8a8a"/>
      <path id="gridLower" class="mesh" clip-path="url(#clipLower)"/>
      <path id="gridUpper" class="mesh" clip-path="url(#clipUpper)"/>
      <path id="outline" fill="none" stroke="#333" stroke-width="1.500"/>
      <path d="M1323.500 567v10M1318.500 572h10" stroke="#4a56b8"/>
      <path d="M719 558l13 2.500 12 8 7.500 11 3 14-3 14-8 12-11 7.500-13.500 2.500-14-3-11.500-7.500-8-12-2-13.500 3-14 7.500-11.500 11-7z" fill="none" stroke="url(#gRing)" stroke-width="1.200"/>
      <path d="M719.500 574v40M699 594h39" stroke="#b0604c" stroke-width="1.200"/>
      <g class="logo">
        <text x="1773" y="249" font-size="47.500" font-weight="700" textLength="139">Ansys</text>
        <path d="M1789.700 223l8 26.500h-16.400z" fill="#6e8ee0"/>
        <text x="1826" y="278.500" font-size="22" font-weight="700" textLength="85">2024 R2</text>
        <path d="M1772 287.500h137" stroke="#dce4f8" stroke-width="2"/>
        <text x="1783" y="314" font-size="23.500" font-weight="800" textLength="111" lengthAdjust="spacingAndGlyphs">STUDENT</text>
      </g>
      <g>
        <rect x="1799.500" y="818" width="5" height="66" fill="#0a8a0a"/><path d="M1803 818v60" stroke="#056005"/>
        <path d="M1802.500 799l8.500 21.500h-17z" fill="#0a8a0a"/><path d="M1802.500 799l8.500 21.500h-6z" fill="#056605"/>
        <rect x="1808" y="883.500" width="62" height="5" fill="#c00000"/>
        <path d="M1889 886.500l-21-8.500v17z" fill="#c80000"/><path d="M1889 886.500l-21 8.500v-6z" fill="#8a0000"/>
        <text x="1803.500" y="885" font-size="13" fill="#2020e0">Z</text>
        <circle cx="1802.500" cy="886" r="9" fill="url(#gBlue)"/>
        <circle cx="1843" cy="845.500" r="9" fill="url(#gTeal)"/>
        <text x="1803" y="785" font-size="14" font-weight="600" fill="#1c9a1c">Y</text>
        <text x="1903.500" y="886" font-size="14.500" font-weight="600" fill="#ff5c5c">X</text>
      </g>
      <g class="scale">
        <rect x="883.500" y="935.500" width="512" height="13" fill="#fff" stroke="#000"/>
        <path d="M883 935h128v14H883zM1139 935h128v14h-128z"/>
        <text x="862" y="927" textLength="39">0.000</text><text x="1119" y="927" textLength="39">5.000</text><text x="1371" y="927" textLength="75">10.000 (m)</text>
        <text x="990" y="969" textLength="39">2.500</text><text x="1246" y="969" textLength="39">7.500</text>
      </g>
    </svg>
  </section>
</main>

<footer class="status">
  <svg class="msg" viewBox="0 0 22 22"><path d="M1 8h17v9h-8l-4 4v-4H1z" fill="#f3c93c" stroke="#8a6d10"/><circle cx="12" cy="7.500" r="6.800" fill="#1c2fd0" stroke="#e8ecff"/><path d="M12 3.500v1.800M12 6.500v5M10.500 11.500h3" stroke="#fff" stroke-width="1.700"/></svg>
  <span class="s-msg">2 Messages</span><span class="s-no">No Selection</span><i class="up"></i><span class="s-met">Metric (m, kg, N, s, V, A)</span><span class="s-deg">Degrees</span><span class="s-rad">rad/s</span><span class="s-cel">Celsius</span>
</footer>

<footer class="task">
  <svg class="weather" viewBox="0 0 32 32"><circle cx="16" cy="16" r="13" fill="url(#gSun)"/><path d="M5 12a4 4 0 0 1-1-7.500 5 5 0 0 1 9 .5 3.600 3.600 0 0 1 2 7z" fill="#a9c6f5"/><path d="M16 28a4 4 0 0 1 0-7 5 5 0 0 1 9-1 4.200 4.200 0 0 1 2 8z" fill="#a9c6f5"/></svg>
  <div class="wtext"><span>31°C</span><span class="soft">Partly sunny</span></div>
  <svg class="start" viewBox="0 0 30 30"><path d="M0 1.500A1.500 1.500 0 0 1 1.500 0H14v14H0zM16 0h12.500A1.500 1.500 0 0 1 30 1.500V14H16zM0 16h14v14H1.500A1.500 1.500 0 0 1 0 28.500zM16 16h14v12.500a1.500 1.500 0 0 1-1.500 1.500H16z" fill="url(#gWin)"/></svg>
  <div class="pill">
    <svg class="mag" viewBox="0 0 20 20"><circle cx="8.500" cy="8" r="6.700" fill="none" stroke="#e8e8e8" stroke-width="1.800"/><path d="M13.500 13l5 5.500" stroke="#e8e8e8" stroke-width="2"/></svg>
    <span>Search</span>
    <svg class="space" viewBox="0 0 64 38"><path d="M4 36C2 28 14 14 24 10L46 8l12 10-6 16-20 3z" fill="#0e3c78" opacity=".75"/><path d="M25 3c-3 14 6 23 18 23 10 0 17-7 17-15 0-3-1-6-2-8z" fill="url(#gPlanet)"/><path d="M4 6l6 2 12 13 3 8-7-4L6 13z" fill="#d9d4e4"/><path d="M8 14l-6 1 8 6zM22 28l3 5 1-9z" fill="#a8a2ba"/><path d="M4 6l6 2 5 5-3 4-6-4z" fill="#f4f2f8"/><circle cx="6" cy="29" r="3.500" fill="#6fa8b8"/><path d="M20 34h1.500M33 30h1.500M44 31h1.500M30 20h1" stroke="#fff" stroke-width="1.500"/></svg>
  </div>
  <div class="app"><svg viewBox="0 0 32 32"><rect x="9" y="2" width="22" height="20" rx="1.500" fill="url(#gTv)"/><rect x="1" y="10" width="22" height="19" rx="1.500" fill="#777" fill-opacity=".85"/></svg></div>
  <div class="app"><svg viewBox="0 0 32 32"><path d="M9 3h9c3 0 4 2 5 5l-6 1c-2 0-3 2-4 5l-2 8c-1 3-3 3-5 3-4 0-5-3-4-7l3-11c1-3 2-4 4-4z" fill="url(#gCopA)"/><path d="M23 29h-9c-3 0-4-2-5-5l6-1c2 0 3-2 4-5l2-8c1-3 3-3 5-3 4 0 5 3 4 7l-3 11c-1 3-2 4-4 4z" fill="url(#gCopB)"/></svg></div>
  <div class="app"><svg viewBox="0 0 32 32"><path d="M1 4.500A1.500 1.500 0 0 1 2.500 3H11l3 4h15.500A1.500 1.500 0 0 1 31 8.500V15H1z" fill="#dd9a12"/><path d="M1 9h30v18.500a1.500 1.500 0 0 1-1.500 1.500h-27A1.500 1.500 0 0 1 1 27.500z" fill="url(#gFolder)"/><path d="M6 29v-5.500A2.500 2.500 0 0 1 8.500 21h15a2.500 2.500 0 0 1 2.500 2.500V29z" fill="#0f78cf"/><path d="M11 25.500h10" stroke="#084d8c" stroke-width="1.500"/></svg></div>
  <div class="app"><svg viewBox="0 0 32 32"><path d="M3 4l9-1 16 1 2 10-2 14-10 2-14-2z" fill="url(#gIj)"/><rect x="6" y="6" width="20" height="20" fill="#080010"/><text x="8.500" y="16" font-size="10.500" font-weight="700" fill="#fff" class="mono">IJ</text><path d="M9 23h8" stroke="#fff" stroke-width="1.600"/></svg></div>
  <div class="app run"><svg viewBox="0 0 32 32"><circle cx="16" cy="16" r="9.500" fill="none" stroke="#80878f" stroke-width="7"/><circle cx="16" cy="16" r="13.500" fill="none" stroke="#80878f" stroke-width="3.500" stroke-dasharray="8 6.130"/><circle cx="16" cy="16" r="6" fill="#1266b8" stroke="#d5e4f2" stroke-width="1.500"/></svg></div>
  <div class="app run"><svg viewBox="0 0 32 32"><rect x="1" y="1" width="30" height="30" fill="#000"/><g fill="none" stroke="#e8a31b" stroke-width="1.500"><path d="M16 1.500l5 2.500v5l-5 2.500-5-2.500V4zM10 10l5 2.500v5L10 20l-5-2.500v-5zM22 10l5 2.500v5L22 20l-5-2.500v-5zM11 4l5 2.500L21 4M16 6.500v5M5 12.500l5 2.500 5-2.500M10 15v5M17 12.500l5 2.500 5-2.500M22 15v5"/></g><text x="6.500" y="30.500" font-size="11" font-weight="700" fill="#fff">WB</text></svg></div>
  <div class="app run cur"><svg viewBox="0 0 32 32"><rect x="1" y="1" width="30" height="30" fill="#000"/><use href="#i-gears" x="4.500" y="1" width="23" height="20"/><text x="10.500" y="30.500" font-size="11" font-weight="700" fill="#fff">M</text></svg></div>
  <div class="app run"><svg viewBox="0 0 32 32"><path d="M5 4h22v24a2 2 0 0 1-2 2H7a2 2 0 0 1-2-2z" fill="#3fb9dc"/><path d="M5 26h22v2.500a1.500 1.500 0 0 1-1.500 1.500h-19A1.500 1.500 0 0 1 5 28.500z" fill="#b8561c"/><path d="M5 25.500h22" stroke="#eee" stroke-width="1.500"/><path d="M10 11h12M10 16h12M10 21h12" stroke="#0c5c80" stroke-width="2"/><path d="M6 3h20" stroke="#1d8db4" stroke-width="4" stroke-dasharray="2 2"/></svg></div>
  <svg class="tray" viewBox="0 0 80 30"><path d="M17 18l6-6 6 6" fill="none" stroke="#fff" stroke-width="1.800"/><path d="M56 21a4.500 4.500 0 0 1 0-8.500 6.500 6.500 0 0 1 12-1 5 5 0 0 1 2 9.500z" fill="#f2f2f2"/><path d="M56 21a4.500 4.500 0 0 1 0-8.500c5 0 8 4 12 8.500z" fill="#bdbdbd"/></svg>
  <div class="lang"><span>ENG</span><span>IN</span></div>
  <svg class="net" viewBox="0 0 96 30"><g fill="none" stroke="#fff" stroke-width="1.700"><path d="M9 12.500a13 13 0 0 1 18 0M12 16a8.500 8.500 0 0 1 12 0M15 19.300a4.300 4.300 0 0 1 6 0"/><path d="M39 12.500h3.500l5-4.500v14l-5-4.500H39zM50.500 12a4.500 4.500 0 0 1 0 6"/><path d="M53 9.500a8 8 0 0 1 0 11" stroke="#777"/><path d="M74 10h11.500v11H70v-5M87.500 14v3.500"/></g><path d="M72 5l-4 7h3l-1.500 5 6-7h-3l2.500-5zM71 17h8v3h-8z" fill="#fff"/><circle cx="18" cy="22" r="1.500" fill="#fff"/></svg>
  <div class="clock"><span>13:20</span><span>04-10-2024</span></div>
  <svg class="bell" viewBox="0 0 20 22"><path d="M2.500 15.500c2-2 2-4 2-7a5.500 5.500 0 0 1 11 0c0 3 0 5 2 7zM8 16c0 3.500 4 3.500 4 0" fill="none" stroke="#fff" stroke-width="1.500" stroke-linejoin="round"/></svg>
</footer>
<script src="mesh.js"></script>
</body>
</html>
```

FILE: styles.css
```css
* { box-sizing: border-box; }
html, body { margin: 0; height: 100%; overflow: hidden; }
body {
  display: grid;
  grid-template-rows: 32px 30px 109px 824px 25px 58px;
  background: #eeeef2;
  color: #262626;
  font: 14px/18px "Open Sans", "Noto Sans", sans-serif;
  letter-spacing: -0.120px;
}
i, em { font-style: normal; }
svg { display: block; flex: none; }
svg text { font-family: "Open Sans", "Noto Sans", sans-serif; letter-spacing: 0; }
.defs { position: absolute; width: 0; height: 0; }
.dim { color: #9d9d9d; }
.caret { flex: none; width: 0; height: 0; border: 4px solid transparent; border-top: 5px solid #7b7b7b; border-bottom: 0; }
.dim .caret { border-top-color: #a2a2a2; }

/* title bar */
.titlebar { display: flex; align-items: flex-start; }
.app-icon { width: 20px; height: 20px; margin: 4px 9px 0 10px; }
.qat-sep { width: 1px; height: 28px; background: #d2d2d8; }
.save { width: 18px; height: 18px; margin: 5px 0 0 7px; }
.qat-more { width: 10px; height: 8px; margin: 9px 72px 0 7px; background: linear-gradient(#555 0 1.500px, transparent 0); }
.qat-more::after { content: ""; display: block; border: 5px solid transparent; border-top-color: #555; border-bottom: 0; margin-top: 3px; width: 0; }
.context { width: 69px; height: 32px; border-top: 5px solid #2c5597; background: #d5e0f3; color: #4472c4; text-align: center; line-height: 28px; }
.title { margin-left: 5px; line-height: 38px; color: #5c5c5c; white-space: nowrap; letter-spacing: -0.130px; }
.winctl { width: 110px; height: 24px; margin: 6px 9px 0 auto; }

/* ribbon tabs */
.tabs { display: flex; align-items: stretch; border-bottom: 1px solid #cfcfd4; }
.tabs span { text-align: center; line-height: 34px; height: 30px; white-space: nowrap; }
.file { width: 70px; background: #0072c6; color: #fff; margin-right: 10px; }
.tabs .home { width: 71px; background: #fafafa; border: 1px solid #cfcfd4; border-bottom: 0; line-height: 32px; }
.t-mesh { width: 73px; } .t-disp { width: 82px; } .t-sel { width: 94px; } .t-auto { width: 115px; } .t-learn { width: 173px; } .t-mot { width: 90px; }
.quick { margin-left: 854px; width: 200px; height: 26px; margin-top: 2px; background: #fff; border: 1px solid #cdcde0; color: #9a9a9a; padding-left: 4px; line-height: 24px; font-size: 13.500px; }
.quick-icons { width: 86px; height: 30px; }

/* ribbon */
.ribbon { display: flex; background: #fafafa; border-bottom: 1px solid #c9c9cc; height: 109px; }
.group { display: grid; grid-template-rows: 79px 16px; padding-top: 6px; position: relative; align-content: start; }
.group::after { content: ""; position: absolute; right: 0; top: 8px; height: 91px; width: 1px; background: #d0d0d0; }
.label { grid-column: 1 / -1; text-align: center; color: #8a8a8a; line-height: 14px; padding-left: 2px; }
.g1 { width: 220px; grid-template-columns: 83px 64px 73px; }
.g2 { width: 79px; grid-template-columns: 79px; }
.g3 { width: 280px; grid-template-columns: 150px 117px; padding-left: 12px; }
.g4 { width: 643px; grid-template-columns: 67px 62px 86px 122px 169px 137px; }
.g5 { width: 195px; grid-template-columns: 66px 129px; }
.g3 .label { margin-left: -12px; }
.col { display: grid; grid-template-rows: repeat(3, 26.300px); }
.col > div { display: flex; align-items: center; white-space: nowrap; }
.col svg { width: 18px; height: 18px; margin-right: 2px; }
.g1 .col svg { margin-right: 1px; }
.col .caret { margin: 0 0 2px 1px; }
.big { display: flex; flex-direction: column; align-items: center; text-align: center; padding-top: 4px; line-height: 13px; white-space: nowrap; }
.g1 .big { padding-left: 3px; }
.big span { margin-top: 9px; }
.big .caret { margin-top: 10px; }
.b36 { width: 36px; height: 36px; }
.b38 { width: 38px; height: 36px; }

/* main */
.main { display: flex; min-height: 0; }
.left { width: 353px; margin-right: 6px; display: grid; grid-template-rows: 25px 34px 430px 7px 25px 303px; min-height: 0; }
.phead { display: flex; align-items: center; padding: 0 8px 1px 6px; gap: 6px; border: 1px solid #cfcfe0; border-width: 1px 1px 0 0; color: #4d4d4d; font-size: 14px; }
.phead:not(.active) { grid-row: 5; }
.phead svg { width: 14px; height: 14px; color: #222; }
.phead .caret { border-width: 5px 5px 0; border-top-color: #222; margin-right: 2px; }
.phead .dots { flex: 1; height: 8px; background: radial-gradient(circle, #b9b9bd 0.800px, transparent 1px) 0 0 / 4px 4px; }
.phead.active { background: #007acc; border: 0; color: #fff; padding-bottom: 0; }
.phead.active svg { color: #fff; } .phead.active .caret { border-top-color: #fff; }
.phead.active .dots { background-image: radial-gradient(circle, #5fb0e6 0.800px, transparent 1px); }
.grip { width: 7px; height: 22px; background: radial-gradient(circle, #b0b0b4 0.900px, transparent 1.200px) 0 0 / 4px 4px; }
.ofilter { display: flex; align-items: center; padding-left: 12px; font-size: 14px; }
.combo { margin-left: 9px; width: 125px; height: 28px; background: #fff; border: 1px solid #cfcfe0; padding: 0 4px 0 3px; display: flex; align-items: center; justify-content: space-between; color: #444; }
.search { width: 112px; height: 28px; background: #fff; border: 1px solid #cfcfe0; border-left-width: 2px; color: #a5a5a5; padding-left: 3px; line-height: 26px; white-space: nowrap; }
.ofilter svg { width: 40px; height: 30px; margin-left: 1px; }
.tree { background: #fff; position: relative; font-size: 13px; letter-spacing: -0.130px; color: #111; }
.tree .lines { position: absolute; left: 0; top: 0; width: 353px; height: 200px; }
.row { display: flex; align-items: center; height: 20px; position: relative; white-space: nowrap; }
.row .ic { width: 18px; height: 18px; }
.row .ok { width: 12px; height: 12px; margin-top: 8px; }
.row span, .row b { margin-left: 5px; padding: 0 2px; line-height: 19px; }
.row b { font-size: 14px; letter-spacing: 0.220px; }
.row span { font-size: 13px; }
.r0 { padding-left: 11px; } .r1 { padding-left: 10px; } .r1 .ic { margin-left: 24px; } .r2 { padding-left: 44px; } .r2 .ok { margin-left: 11px; } .r3 { padding-left: 100px; } .r3 span { letter-spacing: 0; }
.picked { background: #0078d7; color: #fff; }
.pm { flex: none; width: 11px; height: 11px; border: 1px solid #8a8a8a; background: linear-gradient(#111, #111) center / 7px 1px no-repeat #fff; }
.pm.plus { background: linear-gradient(#111, #111) center / 7px 1px no-repeat, linear-gradient(#111, #111) center / 1px 7px no-repeat #fff; }
.pm.none { visibility: hidden; }
.details { grid-row: 6; display: flex; background: #fff; overflow: hidden; }
.dtable { width: 332px; }
.drow { margin-left: 17px; height: 22.500px; display: grid; grid-template-columns: 193px 1fr; border: 1px solid #a0a0a0; border-bottom: 0; position: relative; color: #1a1a2a; font-size: 13px; line-height: 21px; letter-spacing: 0.150px; white-space: nowrap; }
.drow span, .drow b { padding-left: 3px; }
.drow em { border-left: 1px solid #a0a0a0; padding-left: 4px; overflow: hidden; margin-left: -1px; }
.drow .pm { position: absolute; left: -16px; top: 6px; }
.drow b { color: #111; letter-spacing: 0; }
.check { display: inline-block; width: 15px; height: 15px; border: 1px solid #c4c4c4; vertical-align: -3px; margin-right: 5px; }
.scroll { flex: 1; background: #efeff0; padding: 22px 0 0 11px; }
.scroll i { display: block; width: 2.500px; height: 241px; background: #868686; }

/* graphics toolbar */
.right { flex: 1; display: grid; grid-template-rows: 33px 791px; min-width: 0; }
.toolbar { display: flex; align-items: center; border-bottom: 1px solid #d8d8dc; }
.cell { width: 27px; height: 27px; flex: none; display: flex; align-items: center; justify-content: center; color: #555; }
.cell svg, .txt svg { width: 18px; height: 18px; }
.cell .s20 { width: 20px; height: 20px; }
.cell.wide { width: 27.500px; }
.cell.drop { width: 13px; }
.cell.pale { color: #aaa; }
.cell.on { border: 1.500px solid #4a9be8; background: #f4f7fb; }
.sep { width: 1px; height: 26px; margin: 0 4px; background: #cfcfd8; flex: none; }
.txt { display: flex; align-items: center; flex: none; white-space: nowrap; }
.txt svg { margin-right: 3px; }
.txt .caret { margin-left: 1px; border-width: 4px 3.500px 0; }
.x-select { width: 52px; padding-left: 4px; }
.x-mode { width: 72px; margin-right: 9px; }
.x-mode svg { margin-right: 4px; }
.x-clip { width: 96px; margin-left: 2px; }
.x-empty { width: 66px; padding-left: 16px; margin-right: 12px; }
.x-ext { width: 77px; margin-left: 4px; margin-right: 16px; }
.x-by { width: 90px; margin-right: 14px; }
.x-conv { width: 84px; margin-right: 14px; }
.overflow { border: 4.500px solid transparent; border-top: 5px solid #111; border-bottom: 0; margin-top: 13px; }
.view { width: 1559px; height: 791px; }
.mesh { fill: none; stroke: #1a1a1a; stroke-width: 1.600; }
.logo text { fill: #fff; font-family: "Noto Sans", "Open Sans", sans-serif; }
.scale text { font-size: 14px; fill: #222; }

/* status bar */
.status { display: flex; align-items: center; background: #007acc; color: #e6f2fb; padding-left: 1323px; white-space: nowrap; line-height: 24px; padding-top: 2px; }
.msg { width: 22px; height: 22px; margin-right: 1px; }
.s-msg { width: 98px; } .s-no { width: 109px; } .s-met { width: 175px; letter-spacing: 0.260px; } .s-deg { width: 67px; } .s-rad { width: 49px; }
.up { border: 5px solid transparent; border-bottom: 5px solid #fff; border-top: 0; margin: 0 8px 4px 2px; }

/* taskbar */
.task { display: flex; align-items: center; background: #202021; color: #fff; border-top: 1px solid #3a3a3c; padding-top: 2px; letter-spacing: 0; }
.weather { width: 32px; height: 32px; margin: 0 8px 4px 24px; }
.wtext, .lang, .clock { display: flex; flex-direction: column; line-height: 20px; white-space: nowrap; }
.wtext { width: 520px; }
.soft { color: #cfcfcf; }
.start { width: 30px; height: 30px; margin-right: 17px; }
.pill { width: 274px; height: 40px; border-radius: 20px; background: #434046; border: 1px solid #56535a; display: flex; align-items: center; padding-left: 13px; font-size: 16px; color: #d6d6d6; }
.mag { width: 20px; height: 20px; margin-right: 11px; }
.space { width: 64px; height: 38px; margin-left: auto; border-radius: 0 20px 20px 0; }
.app { width: 50px; height: 49px; margin-right: 5px; display: flex; align-items: center; justify-content: center; position: relative; border-radius: 5px; flex: none; }
.app svg { width: 31px; height: 32px; }
.pill + .app { margin-left: 5px; }
.app.run::after { content: ""; position: absolute; bottom: 1px; left: 21px; width: 8px; height: 4px; border-radius: 2px; background: #949494; }
.app.cur { background: #323234; border: 1px solid #3e3e40; }
.app.cur::after { width: 20px; left: 14px; bottom: 0; background: #dcdcdc; }
.mono { font-family: "Liberation Mono", monospace; }
.tray { width: 80px; height: 30px; margin-left: 190px; }
.lang { width: 50px; text-align: center; margin-left: 6px; font-size: 14.500px; }
.net { width: 96px; height: 30px; margin-left: 3px; }
.clock { width: 90px; text-align: right; font-size: 14.500px; letter-spacing: 0.120px; }
.bell { width: 20px; height: 22px; margin-left: 9px; }
```

FILE: mesh.js
```js
// Builds the quadrilateral mesh of the nozzle and the outlet block.
(function () {
  var STEP = 4.82;
  var wall = [[444.5, 714.5], [456, 720.5], [470, 730.5], [482, 742.5], [490, 750], [495, 752.5], [501, 752.5],
    [510, 749], [524, 743], [545, 735.5], [564, 729.5], [597, 723.5], [630, 718], [680, 712.5], [730, 708],
    [780, 704.5], [830, 702], [880, 700.7], [930, 700], [1009, 699]];
  // Right end of the wall-aligned layers, on a column of the regular grid.
  var END = 1834 - STEP * 190;
  var seam = [[END, 756.8], [800, 756.8], [730, 756.8], [690, 761.6], [640, 761.6], [610, 764], [580, 770], [540, 777],
    [500, 781], [478, 778], [466, 756], [444, 722]];

  function smooth(pts) {
    var out = [];
    for (var i = 0; i < pts.length - 1; i++) {
      var a = pts[Math.max(0, i - 1)], b = pts[i], c = pts[i + 1], d = pts[Math.min(pts.length - 1, i + 2)];
      var n = Math.ceil((c[0] - b[0]) * 4);
      var m1 = (c[1] - a[1]) / (c[0] - a[0]), m2 = (d[1] - b[1]) / (d[0] - b[0]), h = c[0] - b[0];
      for (var k = 0; k < n; k++) {
        var t = k / n, t2 = t * t, t3 = t2 * t;
        out.push([b[0] + h * t, (2 * t3 - 3 * t2 + 1) * b[1] + (t3 - 2 * t2 + t) * h * m1 +
          (3 * t2 - 2 * t3) * c[1] + (t3 - t2) * h * m2]);
      }
    }
    out.push(pts[pts.length - 1]);
    return out;
  }
  function poly(pts) {
    return "M" + pts.map(function (p) { return p[0].toFixed(2) + " " + p[1].toFixed(2); }).join("L");
  }
  function set(id, d) { document.getElementById(id).setAttribute("d", d); }

  var curve = smooth(wall);
  var shape = poly(curve) + "V393.500H1834V805H444.500Z";
  set("body", shape);
  set("outline", shape);

  var upper = curve.filter(function (p) { return p[0] <= END; });
  set("upperShape", poly(upper.concat(seam)) + "Z");
  var rest = curve.filter(function (p) { return p[0] > END; });
  set("lowerShape", poly([[444.5, 714.5]].concat(seam.slice().reverse(), rest)) + "V393.500H1834V805H444.500Z");

  var d = "", x, y;
  for (x = 1834; x > 444; x -= STEP) d += "M" + x.toFixed(2) + " " + (x > 1008 ? 393 : 698) + "V805";
  for (y = 805; y > 393; y -= STEP) d += "M" + (y > 698 ? 444 : 1009) + " " + y.toFixed(2) + "H1834";
  set("gridLower", d);

  // Wall-aligned layers: stations along the wall, then offsets along its normals.
  var stations = [], acc = 0;
  for (var i = upper.length - 1; i > 0; i--) {
    var dx = upper[i][0] - upper[i - 1][0], dy = upper[i][1] - upper[i - 1][1], l = Math.hypot(dx, dy);
    if (i === upper.length - 1 || acc >= STEP) {
      if (acc >= STEP) acc -= STEP;
      stations.push({ x: upper[i][0], y: upper[i][1], nx: -dy / l, ny: dx / l });
    }
    acc += l;
  }
  var u = "";
  stations.forEach(function (s) {
    u += "M" + s.x.toFixed(2) + " " + s.y.toFixed(2) + "L" + (s.x + s.nx * 64).toFixed(2) + " " + (s.y + s.ny * 64).toFixed(2);
  });
  for (var j = 1; j < 14; j++) {
    u += poly(stations.map(function (s) { return [s.x + s.nx * STEP * j, s.y + s.ny * STEP * j]; }));
  }
  set("gridUpper", u);
})();
```
